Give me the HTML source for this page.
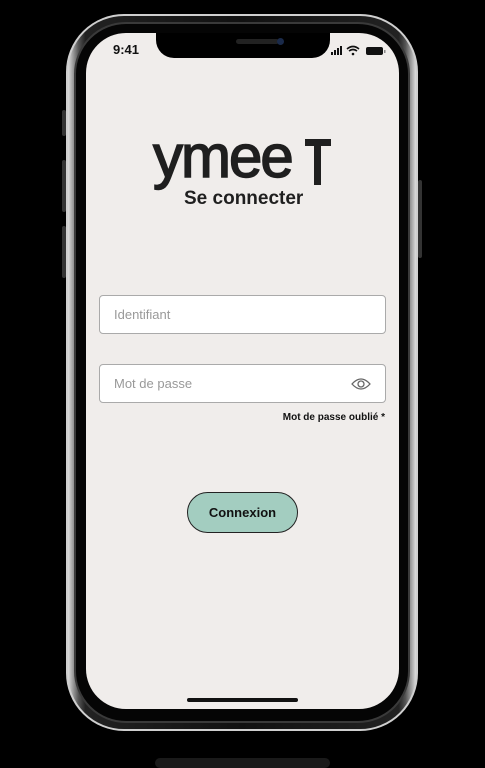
<!DOCTYPE html>
<html><head><meta charset="utf-8"><style>
*{margin:0;padding:0;box-sizing:border-box}
body{width:485px;height:761px;background:#000;position:relative;overflow:hidden;font-family:"Liberation Sans",sans-serif}
.abs{position:absolute}
.frame{left:66px;top:14px;width:352px;height:717px;border-radius:58px;background:linear-gradient(90deg,#ddd,#555 3%,#222 5%,#111 50%,#222 95%,#555 97%,#ddd);border:2px solid #cfcfcf}
.inner{left:74px;top:22px;width:336px;height:701px;border-radius:52px;background:#050505;border:2px solid #3a3a3a}
.screen{left:86px;top:33px;width:313px;height:676px;border-radius:40px;background:#f0edeb;overflow:hidden}
.notch{left:70px;top:-2px;width:174px;height:27px;background:#000;border-radius:0 0 18px 18px}
.btn{background:#333;border-radius:2px}
.input{position:absolute;left:13px;width:287px;height:39px;background:#fff;border:1px solid #aaa;border-radius:4px;font-size:13px;color:#999;padding-left:14px;line-height:37px}
</style></head><body>
<div class="abs btn" style="left:62px;top:110px;width:4px;height:26px"></div>
<div class="abs btn" style="left:62px;top:160px;width:4px;height:52px"></div>
<div class="abs btn" style="left:62px;top:226px;width:4px;height:52px"></div>
<div class="abs btn" style="left:418px;top:180px;width:4px;height:78px"></div>
<div class="abs frame"></div>
<div class="abs inner"></div>
<div class="abs screen">
  <div class="abs notch"></div>
  <div class="abs" style="left:150px;top:6px;width:43px;height:5px;border-radius:3px;background:#222"></div>
  <div class="abs" style="left:191px;top:5px;width:7px;height:7px;border-radius:50%;background:#1a2a4a"></div>
  <div class="abs" style="left:27px;top:9px;font-size:13px;font-weight:bold;color:#111">9:41</div>
  <svg class="abs" style="left:244px;top:12px" width="60" height="12">
    <rect x="1" y="7" width="2" height="3" fill="#111"/><rect x="4" y="5" width="2" height="5" fill="#111"/><rect x="7" y="3" width="2" height="7" fill="#111"/><rect x="10" y="1" width="2" height="9" fill="#111"/>
    <path d="M17 4 Q23 -1 29 4 M19 6 Q23 3 27 6" stroke="#111" stroke-width="1.6" fill="none"/><circle cx="23" cy="9" r="1.3" fill="#111"/>
    <rect x="36" y="2" width="17" height="8" rx="2" fill="#111"/><rect x="54" y="5" width="1.5" height="3" fill="#888"/>
  </svg>
  <div class="abs" style="left:67px;top:93px;font-size:60px;letter-spacing:-2px;color:#1f1f1f;line-height:62px;-webkit-text-stroke:1.5px #1f1f1f">ymee</div>
  <div class="abs" style="left:219px;top:106px;width:26px;height:7px;background:#1f1f1f"></div>
  <div class="abs" style="left:228px;top:106px;width:7px;height:46px;background:#1f1f1f"></div>
  <div class="abs" style="left:98px;top:155px;font-size:19px;font-weight:bold;color:#1f1f1f">Se connecter</div>
  <div class="input" style="top:262px">Identifiant</div>
  <div class="input" style="top:331px">Mot de passe
    <svg class="abs" style="left:251px;top:12px" width="20" height="14"><path d="M1 7 Q10 -3 19 7 Q10 17 1 7Z" fill="none" stroke="#666" stroke-width="1.3"/><circle cx="10" cy="7" r="3" fill="none" stroke="#666" stroke-width="1.3"/></svg>
  </div>
  <div class="abs" style="right:14px;top:379px;font-size:10px;font-weight:bold;color:#111">Mot de passe oublié *</div>
  <div class="abs" style="left:101px;top:459px;width:111px;height:41px;border-radius:21px;background:#a3cdc0;border:1px solid #222;text-align:center;line-height:39px;font-size:13px;font-weight:bold;color:#111">Connexion</div>
  <div class="abs" style="left:101px;top:665px;width:111px;height:4px;border-radius:2px;background:#111"></div>
</div>
<div class="abs" style="left:155px;top:758px;width:175px;height:10px;border-radius:5px;background:#1a1a1a"></div>
</body></html>
